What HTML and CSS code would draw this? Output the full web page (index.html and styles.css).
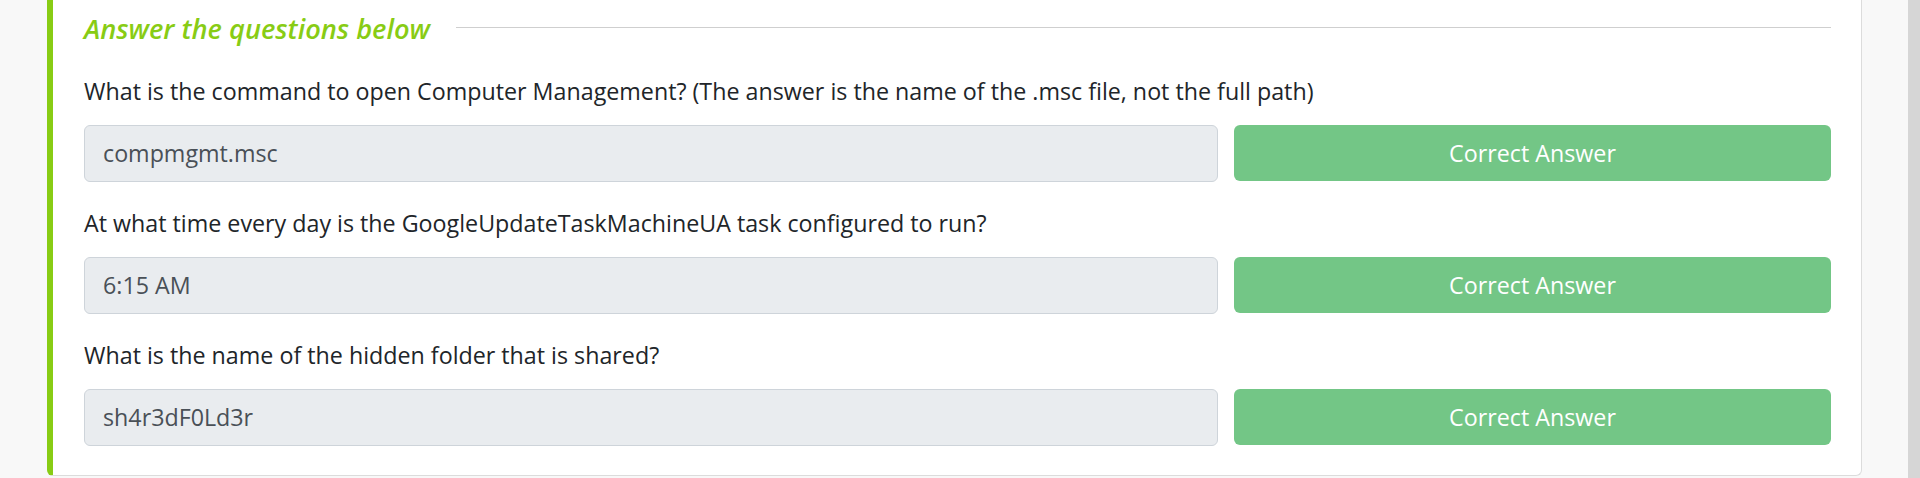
FILE: index.html
```html
<!DOCTYPE html>
<html lang="en">
<head>
<meta charset="utf-8">
<title>Answer the questions below</title>
<link rel="stylesheet" href="styles.css">
</head>
<body>
<div class="page">
  <div class="gutter-left"></div>
  <section class="task-card">
    <div class="heading-row">
      <h2 class="heading">Answer the questions below</h2>
      <span class="rule"></span>
    </div>
    <div class="question">
      <p class="q-text">What is the command to open Computer Management? (The answer is the name of the .msc file, not the full path)</p>
      <div class="answer-row">
        <div class="answer-input">compmgmt.msc</div>
        <button class="btn-correct" type="button">Correct Answer</button>
      </div>
    </div>
    <div class="question">
      <p class="q-text">At what time every day is the GoogleUpdateTaskMachineUA task configured to run?</p>
      <div class="answer-row">
        <div class="answer-input">6:15 AM</div>
        <button class="btn-correct" type="button">Correct Answer</button>
      </div>
    </div>
    <div class="question last">
      <p class="q-text">What is the name of the hidden folder that is shared?</p>
      <div class="answer-row">
        <div class="answer-input">sh4r3dF0Ld3r</div>
        <button class="btn-correct" type="button">Correct Answer</button>
      </div>
    </div>
  </section>
  <div class="gutter-right"></div>
  <div class="scrollbar"></div>
</div>
</body>
</html>
```

FILE: styles.css
```css
html, body {
  margin: 0;
  padding: 0;
  height: 100%;
}
body {
  background: #f8f8f8;
  font-family: "Open Sans", "Noto Sans", sans-serif;
  overflow: hidden;
}
.page {
  display: flex;
  height: 478px;
  align-items: flex-start;
}
.gutter-left {
  width: 47px;
  flex: none;
}
.gutter-right {
  width: 46px;
  flex: none;
}
.scrollbar {
  width: 12px;
  flex: none;
  height: 100%;
  background: #d6d6d6;
}
.task-card {
  flex: 1;
  min-width: 0;
  background: #ffffff;
  border: 1px solid #dcdcdc;
  border-top: none;
  border-left: 6px solid #88cc14;
  border-radius: 0 0 6px 6px;
  padding: 13px 30px 29px 31px;
}
.heading-row {
  display: flex;
  align-items: center;
  gap: 26px;
  margin-bottom: 28px;
}
.heading {
  margin: 0;
  font-size: 27.2px;
  line-height: 32px;
  font-weight: 600;
  font-style: italic;
  color: #88cc14;
  white-space: nowrap;
}
.rule {
  flex: 1;
  height: 1px;
  margin-top: -3px;
  background: #cfcfcf;
}
.question {
  margin-bottom: 23px;
}
.question.last {
  margin-bottom: 0;
}
.q-text {
  margin: 0 0 16px;
  font-size: 23.25px;
  line-height: 36px;
  color: #212529;
}
.answer-row {
  display: grid;
  grid-template-columns: minmax(0, 1134fr) minmax(0, 597fr);
  gap: 16px;
}
.answer-input {
  box-sizing: border-box;
  height: 57px;
  padding: 0 18px;
  line-height: 55px;
  font-size: 23.25px;
  color: #495057;
  background: #e9ecef;
  border: 1px solid #ced4da;
  border-radius: 6px;
}
.btn-correct {
  height: 56px;
  margin: 0;
  padding: 0;
  border: none;
  border-radius: 6px;
  background: rgb(115, 198, 134);
  color: #ffffff;
  font-family: inherit;
  font-size: 23.25px;
  line-height: 56px;
  cursor: default;
}
```
